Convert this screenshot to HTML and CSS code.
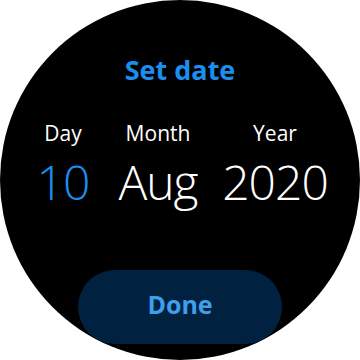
FILE: index.html
```html
<!DOCTYPE html>
<html lang="en">
<head>
<meta charset="UTF-8">
<meta name="viewport" content="width=device-width, initial-scale=1.0">
<title>Set date</title>
<link rel="stylesheet" href="styles.css">
</head>
<body>
<!-- watch face -->
<div class="watch">
<div class="title">Set date</div>

<div class="picker">
<div class="col col-day">
<div class="label">Day</div>
<div class="value active">10</div>
</div>
<div class="col col-month">
<div class="label">Month</div>
<div class="value">Aug</div>
</div>
<div class="col col-year">
<div class="label">Year</div>
<div class="value">2020</div>
</div>
</div>

<button class="done">Done</button>
</div>
</body>
</html>
```

FILE: styles.css
```css
/* page */
body {
margin: 0;
width: 360px;
height: 360px;
background-color: #fff;
font-family: "Open Sans", "Noto Sans", sans-serif;
}

/* round watch screen */
.watch {
width: 360px;
height: 360px;
border-radius: 50%;
background-color: #000;
overflow: hidden;
display: flex;
flex-direction: column;
align-items: center;
}

.title {
margin-top: 50px;
font-size: 27px;
font-weight: 700;
line-height: 40px;
color: #1a8ff0;
}

/* date columns */
.picker {
margin-top: 28px;
display: flex;
width: 302px;
}

.col {
display: flex;
flex-direction: column;
align-items: center;
}

.col-day {
width: 68px;
}

.col-month {
width: 122px;
}

.col-year {
width: 112px;
}

.label {
font-size: 21px;
line-height: 30px;
color: #fff;
}

.value {
font-size: 48px;
font-weight: 350;
line-height: 68px;
letter-spacing: -1px;
color: #fff;
}

.value.active {
color: #1a8ff0;
}

/* bottom button */
.done {
margin-top: 54px;
width: 204px;
height: 74px;
border: none;
border-radius: 37px;
background-color: #002240;
color: #3ea0ec;
font-family: inherit;
font-size: 25px;
font-weight: 700;
padding: 0 0 6px;
}
```
